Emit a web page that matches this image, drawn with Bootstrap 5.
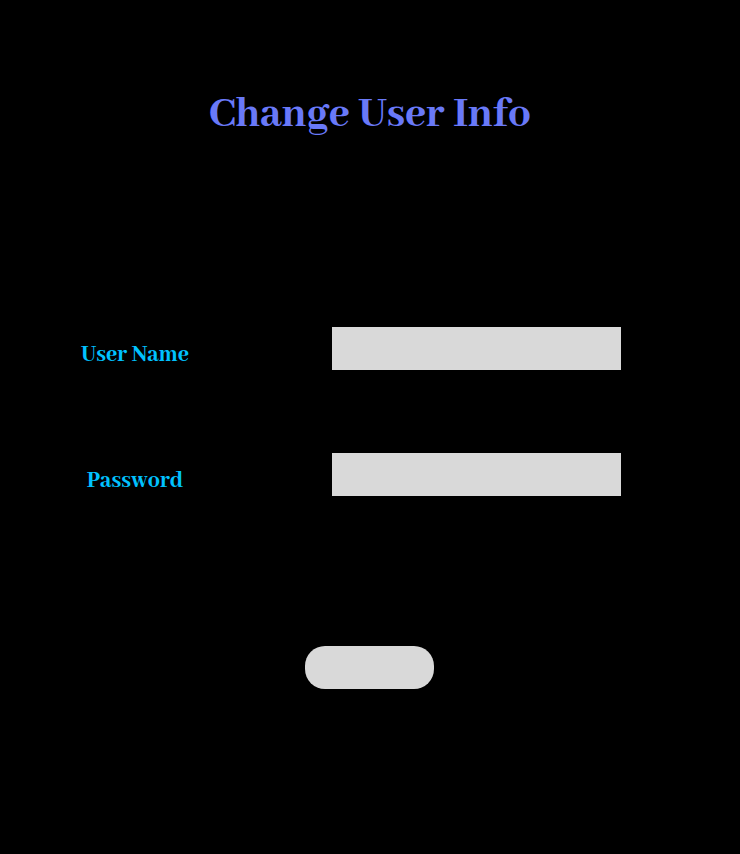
<!DOCTYPE html>
<html lang="en">
<head>
<meta charset="utf-8">
<meta name="viewport" content="width=device-width, initial-scale=1">
<title>Change User Info</title>
<link href="https://cdn.jsdelivr.net/npm/bootstrap@5.3.0/dist/css/bootstrap.min.css" rel="stylesheet">
<style>
body { background: #000; font-family: "Abhaya Libre ExtraBold", "Abhaya Libre", "Liberation Serif", serif; font-weight: 800; }
.page-title { color: #6979f8; font-size: 45px; line-height: 54px; font-weight: 800; padding-top: 88px; }
.info-form { padding-top: 185px; }
.field-rows { row-gap: 83px; padding-right: 119px; }
.field-row { display: grid; grid-template-columns: 270fr 62fr 289fr; align-items: center; }
.field-label { color: #00c2ff; font-size: 24px; line-height: 28px; padding-top: 12px; }
.field-input { grid-column: 3; height: 43px; background: #d9d9d9; }
.field-input:focus { background: #d9d9d9; }
.submit-row { padding: 150px 1px 0 0; }
.submit-button { width: 129px; height: 43px; background: #d9d9d9; border-radius: 20px; }
.submit-button:hover { background: #c8c8c8; }
</style>
</head>
<body>
<main>
  <h1 class="page-title text-center mb-0">Change User Info</h1>
  <form class="info-form">
    <div class="field-rows d-flex flex-column">
      <div class="field-row">
        <label class="field-label text-center" for="username">User Name</label>
        <input class="field-input form-control border-0 rounded-0" type="text" id="username" autocomplete="username">
      </div>
      <div class="field-row">
        <label class="field-label text-center" for="password">Password</label>
        <input class="field-input form-control border-0 rounded-0" type="password" id="password" autocomplete="current-password">
      </div>
    </div>
    <div class="submit-row d-flex justify-content-center">
      <button class="submit-button btn border-0" type="submit" aria-label="Submit"></button>
    </div>
  </form>
</main>
<script src="https://cdn.jsdelivr.net/npm/bootstrap@5.3.0/dist/js/bootstrap.bundle.min.js"></script>
</body>
</html>
